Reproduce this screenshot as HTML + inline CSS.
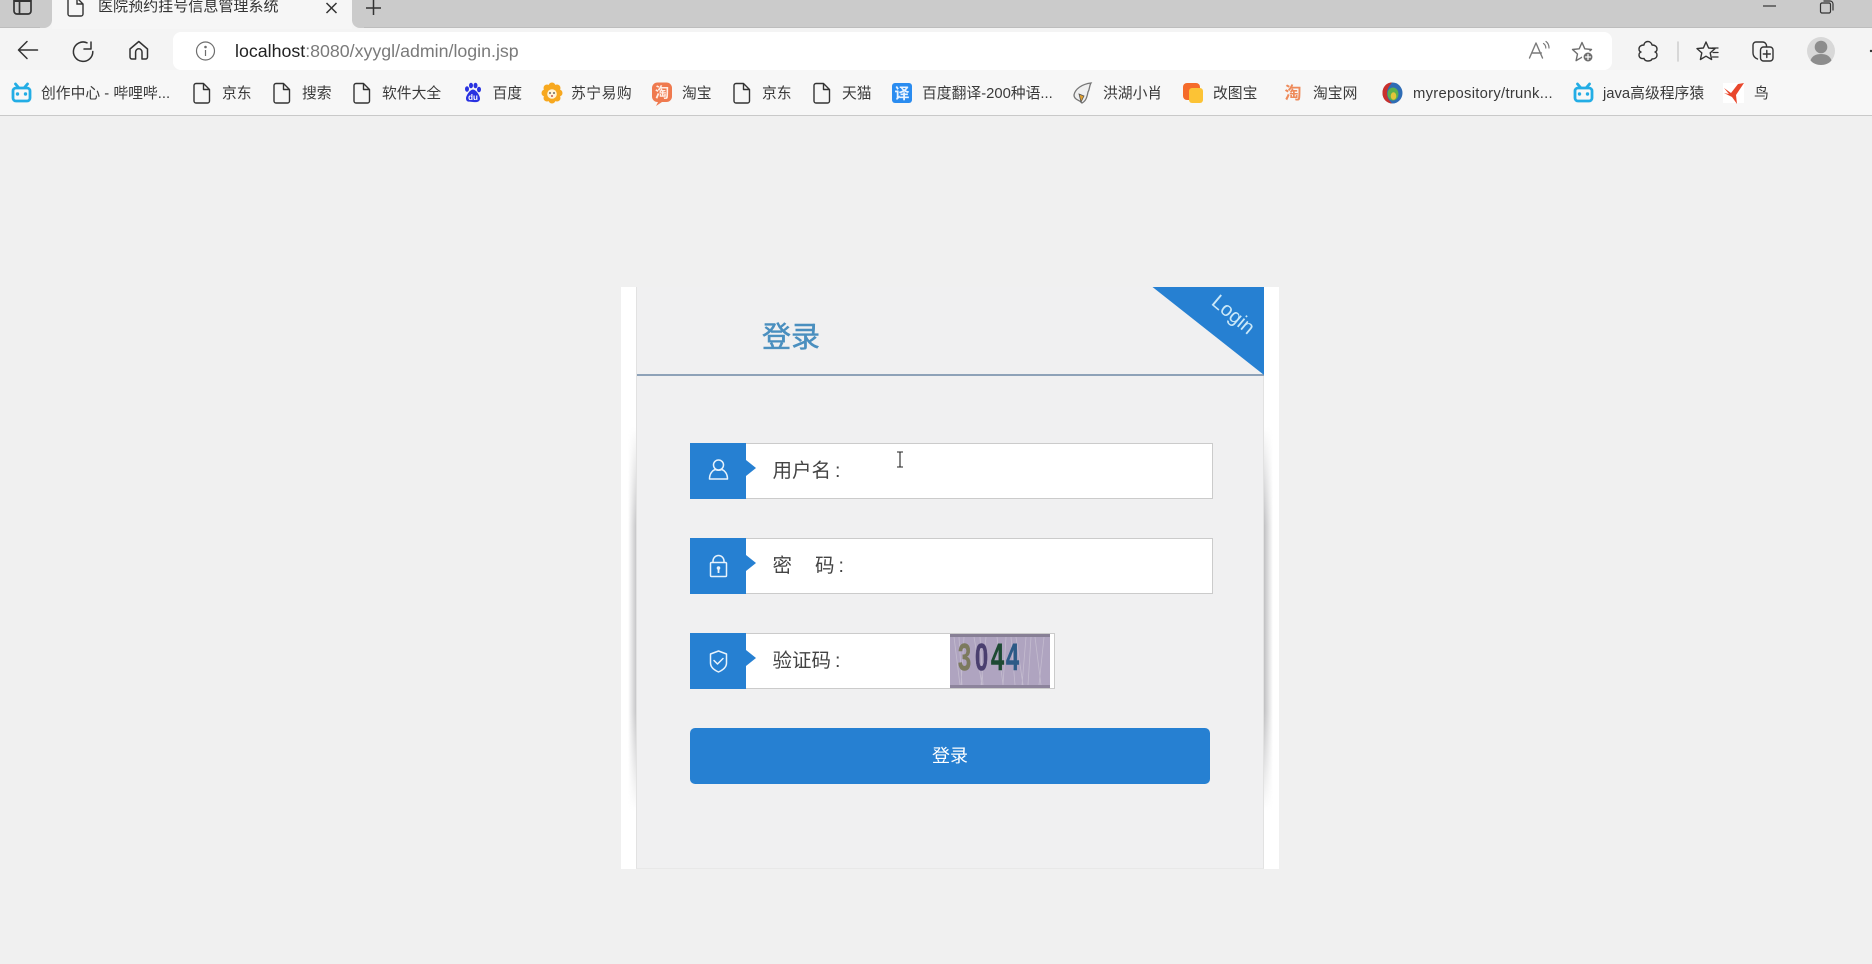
<!DOCTYPE html>
<html lang="zh"><head><meta charset="utf-8"><title>医院预约挂号信息管理系统</title>
<style>
html,body{margin:0;padding:0;width:1872px;height:964px;overflow:hidden;background:#f0f0f0;font-family:"Liberation Sans","Noto Sans CJK SC",sans-serif;color:#333}
.a{position:absolute}
.t{position:absolute;white-space:nowrap;line-height:20px;font-size:14.8px;color:#3a3a3a;top:83.5px}
svg{position:absolute;overflow:visible}
.lb{position:absolute;left:772.5px;font-size:19.5px;line-height:28px;color:#444;white-space:nowrap}
.lb i{font-style:normal;margin-left:4px}
.tri{position:absolute;left:746px;width:0;height:0;border-left:10px solid #2680d2;border-top:8px solid transparent;border-bottom:8px solid transparent}
.ib{position:absolute;left:690px;width:56px;height:56px;background:#2680d2}
.in{position:absolute;left:746px;background:#fff;border:1px solid #cbcbcb;border-left:0;box-sizing:border-box;height:56px}
.sh{position:absolute;top:287px;width:15px;height:582px;-webkit-mask-image:linear-gradient(180deg,transparent 24%,#000 41%,#000 73%,transparent 90%);mask-image:linear-gradient(180deg,transparent 24%,#000 41%,#000 73%,transparent 90%)}
</style></head><body>
<!-- tab strip -->
<div class="a" style="left:0;top:0;width:1872px;height:27px;background:#cbcbcb;border-bottom:1px solid #bdbdbd"></div>
<div class="a" style="left:0;top:28px;width:1872px;height:42px;background:#f4f4f4"></div>
<div class="a" style="left:0;top:70px;width:1872px;height:45px;background:#f7f7f7;border-bottom:1px solid #c9c9c9"></div>
<div class="a" style="left:52px;top:0;width:300px;height:29px;background:#f6f6f6"></div>
<div class="a" style="left:40px;top:21px;width:12px;height:8px;background:#f4f4f4"></div>
<div class="a" style="left:40px;top:15px;width:12px;height:13px;background:#cbcbcb;border-bottom-right-radius:8px"></div>
<div class="a" style="left:352px;top:21px;width:12px;height:8px;background:#f4f4f4"></div>
<div class="a" style="left:352px;top:15px;width:12px;height:13px;background:#cbcbcb;border-bottom-left-radius:8px"></div>
<div class="t" style="left:98px;top:-3px;font-size:15.05px;color:#333">医院预约挂号信息管理系统</div>
<svg style="left:0;top:0" width="400" height="28" fill="none" stroke="#333" stroke-width="1.5">
<path d="M17-4h11a3 3 0 0 1 3 3v12a3 3 0 0 1-3 3H17a3 3 0 0 1-3-3V-1a3 3 0 0 1 3-3zM19.500-4v18" stroke-width="1.700"/><path d="M14-2h17v4H14z" fill="#333" stroke="none"/>
<path d="M70-2h7l6 6v10a2 2 0 0 1-2 2H70a2 2 0 0 1-2-2V0a2 2 0 0 1 2-2zM77-2v6h6" stroke-width="1.4"/>
<path d="M326.500 3l10 10M336.500 3l-10 10" stroke-width="1.5"/>
<path d="M366 8h15M373.500 0v15" stroke-width="1.5"/>
</svg>
<!-- window controls -->
<svg style="left:1760px;top:0" width="80" height="20" fill="none" stroke="#333" stroke-width="1.2">
<path d="M3 6h13"/><path d="M62 3h7a1.500 1.500 0 0 1 1.500 1.500V11.500A1.500 1.500 0 0 1 69 13h-7a1.500 1.500 0 0 1-1.500-1.500V4.500A1.500 1.500 0 0 1 62 3z"/><path d="M63.500 1h6.500a3 3 0 0 1 3 3v6.500"/>
</svg>
<!-- nav icons -->
<svg style="left:0;top:28px" width="230" height="44" fill="none" stroke="#333" stroke-width="1.5" stroke-linecap="round" stroke-linejoin="round">
<path d="M18.500 22h19M18.500 22l8.500-8.500M18.500 22l8.500 8.500"/>
<path d="M87 14.800a9.700 9.700 0 1 0 5.800 8.700"/><path d="M91 14v7h-7"/>
<path d="M130 21l8.800-7.500 8.700 7.500v8a2 2 0 0 1-2 2h-3.500v-7a3.200 3.200 0 0 0-6.400 0v7H132a2 2 0 0 1-2-2z"/>
</svg>
<!-- address bar -->
<div class="a" style="left:173px;top:32px;width:1439px;height:38px;background:#fff;border-radius:8px"></div>
<svg style="left:195px;top:41px" width="22" height="22" fill="none" stroke="#6e6e6e" stroke-width="1.200"><circle cx="10.500" cy="10" r="9"/><path d="M10.500 9v6"/><circle cx="10.500" cy="6" r=".7" fill="#6e6e6e"/></svg>
<div class="a" style="left:235px;top:40px;font-size:17.8px;line-height:22px;white-space:nowrap;color:#7a7a7a"><span style="color:#222">localhost</span>:8080/xyygl/admin/login.jsp</div>
<!-- right toolbar -->
<svg style="left:1520px;top:28px" width="352" height="46" fill="none" stroke="#333" stroke-width="1.400" stroke-linejoin="round" stroke-linecap="round">
<g stroke="#7a7a7a"><path d="M9.500 30l6.500-15 6.500 15M11.800 25h9.500"/><path d="M23.500 15.500c1.500 1 2.300 2.500 2.300 4.500M26 13.500c2 1.500 3 3.500 3 6.500" stroke-width="1.200"/></g>
<g stroke="#6e6e6e"><path d="M62 14.500l2.800 6.300 6.700.7-5 4.500 1.400 6.600-5.900-3.400-5.900 3.400 1.400-6.600-5-4.500 6.700-.7z"/><circle cx="68" cy="29" r="5.200" fill="#6e6e6e" stroke="#fff" stroke-width="1.500"/><path d="M65.500 29h5M68 26.500v5" stroke="#fff" stroke-width="1.200"/></g>
<path d="M124 17c0-2 1.800-3.500 3.800-3.500s3.700 1.500 4.200 3.500c3 0 5 1.500 5 4 0 1.500-.5 2.500-2 3 1.500.5 2 1.500 2 3 0 2.500-2 4-5 4-.5 1.500-2.200 2-4.200 2s-3.300-1-3.800-2.500c-3 .5-5-1-5-3.500 0-1.500.5-2.500 2-3-1.500-.5-2-1.500-2-3 0-2.500 2-4 5-4z"/>
<path d="M158 14v19" stroke="#cdcdcd" stroke-width="1.500"/>
<path d="M186 14l2.600 6 6.400.6-4.800 4.300 1.400 6.600-5.600-3.300-5.600 3.300 1.400-6.600-4.800-4.300 6.400-.6z"/><path d="M192 20h6M193 24.500h5M192.500 29h5.500" stroke-width="1.300"/>
<path d="M237.500 31c-2.500-1-4.500-3-4.500-6v-8a3 3 0 0 1 3-3h6.500a4 4 0 0 1 4 4.500"/><rect x="240.500" y="19" width="12.500" height="14" rx="3"/><path d="M246.800 22.500v7M243.300 26h7"/>
<circle cx="301" cy="23" r="14" fill="#d8d8d8" stroke="none"/><circle cx="301" cy="19" r="6.300" fill="#8c8c8c" stroke="none"/><path d="M290.500 32.500c1.500-4.500 5-6.500 10.500-6.500s9 2 10.500 6.500c-2.500 3-6.500 4.500-10.500 4.500s-8-1.500-10.500-4.500z" fill="#8c8c8c" stroke="none"/>
<circle cx="351" cy="23" r="1.200" fill="#333" stroke="none"/>
</svg>
<!-- bookmarks -->
<svg style="left:0;top:76px" width="1872" height="36" fill="none">
<!-- bili 1 -->
<g stroke="#23ade5" stroke-width="2.800" stroke-linecap="round"><rect x="13" y="12" width="17" height="13" rx="3"/><path d="M15.500 8l3 3.500M27.500 8l-3 3.500"/></g><circle cx="17.500" cy="18" r="1.700" fill="#23ade5"/><circle cx="25.500" cy="18" r="1.700" fill="#23ade5"/>
<!-- docs -->
<g stroke="#333" stroke-width="1.400" stroke-linejoin="round">
<path d="M196 7.500h7.500l6 6V25a2 2 0 0 1-2 2h-11.500a2 2 0 0 1-2-2V9.500a2 2 0 0 1 2-2zM203.500 7.500v6h6"/>
<path d="M276 7.500h7.500l6 6V25a2 2 0 0 1-2 2h-11.500a2 2 0 0 1-2-2V9.500a2 2 0 0 1 2-2zM283.500 7.500v6h6"/>
<path d="M356 7.500h7.500l6 6V25a2 2 0 0 1-2 2h-11.500a2 2 0 0 1-2-2V9.500a2 2 0 0 1 2-2zM363.500 7.500v6h6"/>
<path d="M736 7.500h7.500l6 6V25a2 2 0 0 1-2 2h-11.500a2 2 0 0 1-2-2V9.500a2 2 0 0 1 2-2zM743.500 7.500v6h6"/>
<path d="M816 7.500h7.500l6 6V25a2 2 0 0 1-2 2h-11.500a2 2 0 0 1-2-2V9.500a2 2 0 0 1 2-2zM823.500 7.500v6h6"/>
</g>
<!-- baidu -->
<g fill="#2932e1"><ellipse cx="467" cy="13" rx="2" ry="2.800"/><ellipse cx="471" cy="9.500" rx="2" ry="2.800"/><ellipse cx="475.500" cy="9.500" rx="2" ry="2.800"/><ellipse cx="479" cy="13.500" rx="2" ry="2.800"/><path d="M473 13.500c3 0 7 6 7 9 0 3.500-3.500 4-7 3.500s-7 .5-7-3.500c0-3 4-9 7-9z"/></g>
<text x="473" y="24" font-size="8" font-weight="700" fill="#fff" text-anchor="middle" font-family="Liberation Sans,sans-serif">du</text>
<!-- suning -->
<g fill="#f7a81f"><circle cx="552" cy="10" r="3.500"/><circle cx="552" cy="24" r="3.500"/><circle cx="545" cy="17" r="3.500"/><circle cx="559" cy="17" r="3.500"/><circle cx="547" cy="12" r="3.500"/><circle cx="557" cy="12" r="3.500"/><circle cx="547" cy="22" r="3.500"/><circle cx="557" cy="22" r="3.500"/><circle cx="552" cy="17" r="6"/></g><circle cx="552" cy="18" r="4.800" fill="#fff4d8"/><circle cx="550" cy="17" r=".9" fill="#444"/><circle cx="554" cy="17" r=".9" fill="#444"/><path d="M551 20h2" stroke="#a33" stroke-width="1.200"/>
<!-- taobao -->
<rect x="652" y="6.500" width="20" height="19.500" rx="5.500" fill="#ef7a4f"/><path d="M656 30l2-4h4z" fill="#ef7a4f"/><text x="662" y="21.500" font-size="14" font-weight="700" fill="#ffeee6" text-anchor="middle" font-family="Liberation Sans,Noto Sans CJK SC,sans-serif">淘</text>
<!-- fanyi -->
<rect x="892" y="7" width="20" height="20" rx="3" fill="#2a8cf0"/><text x="902" y="22.500" font-size="15" font-weight="700" fill="#eaf4ff" text-anchor="middle" font-family="Liberation Sans,Noto Sans CJK SC,sans-serif">译</text>
<!-- hh -->
<path d="M1074 19c1-6 8-11 17-12-2 3-1 6-3 9-1 5-2 9-6 11-2-3-8-3-8-8z" fill="#efefef" stroke="#777" stroke-width="1.300"/><path d="M1079 18l5 2-3 6z" fill="#e0a030" stroke="#555" stroke-width=".8"/>
<!-- gaitu -->
<rect x="1183" y="7" width="17" height="17" rx="4" fill="#f56b2a"/><rect x="1189" y="12" width="14" height="15" rx="3" fill="#fcc335"/>
<!-- taobaonet -->
<text x="1293" y="23" font-size="17" font-weight="700" fill="#ee8a5a" text-anchor="middle" font-family="Liberation Sans,Noto Sans CJK SC,sans-serif">淘</text>
<!-- repo -->
<ellipse cx="1392.500" cy="17" rx="10" ry="10.500" fill="#2e6cb5"/><path d="M1392 6.500c-6 0-9.500 5-9.500 10.500s3.500 10 9.500 10.500c-3-3-5-6-5-10.500s3-8 5-10.500z" fill="#c9302c"/><ellipse cx="1393" cy="18" rx="5.500" ry="6.500" fill="#5cb04d"/><ellipse cx="1393.500" cy="20" rx="2.800" ry="3.800" fill="#e3c53a"/>
<!-- bili 2 -->
<g stroke="#23ade5" stroke-width="2.800" stroke-linecap="round"><rect x="1575" y="12" width="17" height="13" rx="3"/><path d="M1577.500 8l3 3.500M1589.500 8l-3 3.500"/></g><circle cx="1579.500" cy="18" r="1.700" fill="#23ade5"/><circle cx="1587.500" cy="18" r="1.700" fill="#23ade5"/>
<!-- bird -->
<rect x="1723" y="7" width="21" height="20" fill="#fff"/>
<path d="M1724 12l7 5 7-9 6-1-4 6-4 6 1 9-5-7-8-4 5 1z" fill="#e8472c"/>
</svg>
<div class="t" style="left:41px">创作中心 - 哔哩哔...</div>
<div class="t" style="left:222px">京东</div>
<div class="t" style="left:302px">搜索</div>
<div class="t" style="left:382px">软件大全</div>
<div class="t" style="left:492.500px">百度</div>
<div class="t" style="left:571px;letter-spacing:.5px">苏宁易购</div>
<div class="t" style="left:682px">淘宝</div>
<div class="t" style="left:762px">京东</div>
<div class="t" style="left:842px">天猫</div>
<div class="t" style="left:922px">百度翻译-200种语...</div>
<div class="t" style="left:1103px">洪湖小肖</div>
<div class="t" style="left:1213px">改图宝</div>
<div class="t" style="left:1313px">淘宝网</div>
<div class="t" style="left:1413px;letter-spacing:.28px">myrepository/trunk...</div>
<div class="t" style="left:1603px">java高级程序猿</div>
<div class="t" style="left:1754px">鸟</div>
<!-- login panel -->
<div class="a" style="left:621px;top:287px;width:658px;height:582px;background:#fff"></div>
<div class="sh" style="left:622px;background:linear-gradient(90deg,rgba(255,255,255,0) 40%,rgba(192,192,194,1) 100%)"></div>
<div class="sh" style="left:1264px;background:linear-gradient(270deg,rgba(255,255,255,0) 40%,rgba(192,192,194,1) 100%)"></div>
<div class="a" style="left:636px;top:287px;width:628px;height:582px;background:#f0f0f1;box-sizing:border-box;border-left:1px solid #e2e2e2;border-right:1px solid #e2e2e2;border-bottom:1px solid #e8e8e8"></div>
<div class="a" style="left:637px;top:374px;width:627px;height:2px;background:#8ea2b8"></div>
<svg style="left:1150px;top:287px" width="116" height="90"><path d="M2.500 0H114V88z" fill="#2680d2"/></svg>
<div class="a" style="left:1203px;top:303px;width:60px;text-align:center;font-size:20px;line-height:24px;color:#cbe8f8;transform:rotate(40deg);white-space:nowrap">Login</div>
<div class="a" style="left:762px;top:319px;font-size:29px;line-height:38px;color:#4a8fbf;white-space:nowrap;-webkit-text-stroke:.5px #4a8fbf">登录</div>
<!-- row1 -->
<div class="in" style="top:443px;width:467px"></div>
<div class="ib" style="top:443px"></div><div class="tri" style="top:460px"></div>
<svg style="left:706px;top:458px" width="26" height="24" fill="none" stroke="#e8f3fc" stroke-width="1.500"><circle cx="12.500" cy="7" r="5"/><path d="M3.500 21c0-5.500 3-8.500 5.500-9.500 2 1 5 1 7 0 2.500 1 5.500 4 5.500 9.500z" stroke-linejoin="round"/></svg>
<div class="lb" style="top:457px">用户名<i>:</i></div>
<!-- row2 -->
<div class="in" style="top:538px;width:467px"></div>
<div class="ib" style="top:538px"></div><div class="tri" style="top:555px"></div>
<svg style="left:706px;top:553px" width="26" height="26" fill="none" stroke="#e8f3fc" stroke-width="1.500"><rect x="4.500" y="9.500" width="16" height="14" rx="1"/><path d="M7 9.500V8a5.500 5.500 0 0 1 11 0v1.500"/><circle cx="12.500" cy="15" r="1.800" fill="#e8f3fc" stroke="none"/><path d="M12.500 15v5" stroke-width="1.800"/></svg>
<div class="lb" style="top:552px">密<span style="margin-left:23px">码</span><i>:</i></div>
<!-- row3 -->
<div class="in" style="top:633px;width:309px"></div>
<div class="ib" style="top:633px"></div><div class="tri" style="top:650px"></div>
<svg style="left:706px;top:648px" width="26" height="26" fill="none" stroke="#e8f3fc" stroke-width="1.500" stroke-linejoin="round" stroke-linecap="round"><path d="M12.500 3l8 3v9c0 4-3.500 7-8 9-4.500-2-8-5-8-9V6z"/><path d="M8 12.500l3.500 3.500 5.500-5.500"/></svg>
<div class="lb" style="top:647px">验证码<i>:</i></div>
<!-- captcha -->
<svg style="left:950px;top:634px" width="100" height="54" font-family="Liberation Sans,sans-serif" font-weight="700" font-size="38">
<rect width="100" height="54" fill="#afa4c0"/>
<rect width="100" height="3" fill="#7d7589" opacity=".8"/><rect y="51" width="100" height="3" fill="#857c92" opacity=".8"/>
<g stroke="#cdc6d6" stroke-width=".8" fill="none" opacity=".7">
<path d="M4 3l6 48M14 3l-3 48M24 3l8 48M36 3l-5 48M47 3l6 48M56 3l-3 48M66 3l7 48M76 3l-4 48M85 3l6 48M94 3l-5 48M9 3l3 48M30 3l3 48M61 3l4 48M81 3l-3 48"/>
</g>
<text transform="translate(8 36) scale(.62 1)" fill="#7c7a5e" stroke="#7c7a5e" stroke-width=".6">3</text>
<text transform="translate(25 36) scale(.62 1)" fill="#4a3f6f" stroke="#4a3f6f" stroke-width=".6">0</text>
<text transform="translate(41 36) scale(.62 1)" fill="#1d4a33" stroke="#1d4a33" stroke-width=".6">4</text>
<text transform="translate(56 36) scale(.62 1)" fill="#2c5a86" stroke="#2c5a86" stroke-width=".6">4</text>
</svg>
<!-- button -->
<div class="a" style="left:690px;top:728px;width:520px;height:56px;background:#2680d2;border-radius:5px;color:#fff;font-size:18px;line-height:56px;text-align:center">登录</div>
<!-- I-beam cursor -->
<svg style="left:895px;top:451px" width="12" height="18" fill="none" stroke="#222" stroke-width="1.100"><path d="M2 1h6M2 16h6M5 1v15"/></svg>
</body></html>
